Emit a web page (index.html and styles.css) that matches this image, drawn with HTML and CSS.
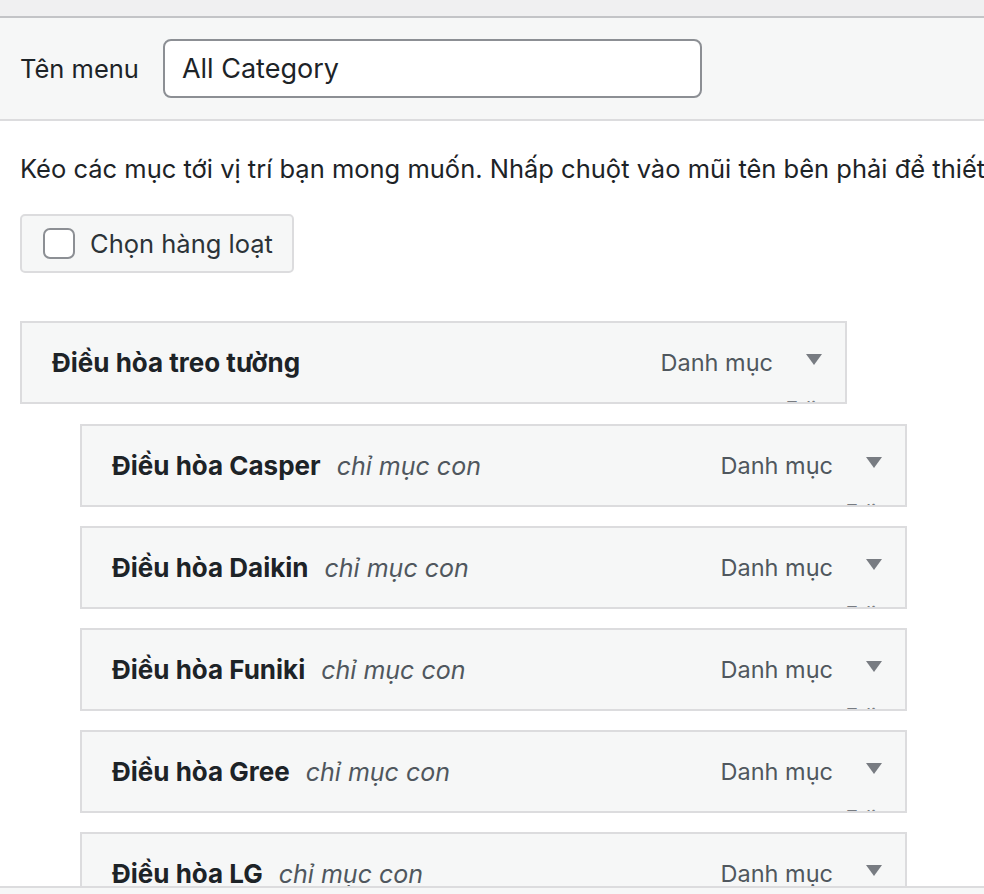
FILE: index.html
```html
<!DOCTYPE html>
<html lang="vi">
<head>
<meta charset="utf-8">
<title>Menu</title>
<link rel="stylesheet" href="styles.css">
</head>
<body>
<div class="topbar"></div>
<div class="header">
  <label class="label" for="menu-name">Tên menu</label>
  <input id="menu-name" class="name-input" type="text" value="All Category">
</div>
<div class="content">
  <p class="hint">Kéo các mục tới vị trí bạn mong muốn. Nhấp chuột vào mũi tên bên phải để thiết lập các tùy chọn cấu hình thêm.</p>
  <label class="bulk">
    <span class="checkbox"></span>
    <span>Chọn hàng loạt</span>
  </label>
  <ul class="menu">
    <li class="item">
      <span class="title">Điều hòa treo tường</span>
      <span class="type">Danh mục</span>
      <span class="arrow"></span>
      <span class="edit">Edit</span>
    </li>
    <li class="item sub">
      <span class="title">Điều hòa Casper</span><span class="subtag">chỉ mục con</span>
      <span class="type">Danh mục</span>
      <span class="arrow"></span>
      <span class="edit">Edit</span>
    </li>
    <li class="item sub">
      <span class="title">Điều hòa Daikin</span><span class="subtag">chỉ mục con</span>
      <span class="type">Danh mục</span>
      <span class="arrow"></span>
      <span class="edit">Edit</span>
    </li>
    <li class="item sub">
      <span class="title">Điều hòa Funiki</span><span class="subtag">chỉ mục con</span>
      <span class="type">Danh mục</span>
      <span class="arrow"></span>
      <span class="edit">Edit</span>
    </li>
    <li class="item sub">
      <span class="title">Điều hòa Gree</span><span class="subtag">chỉ mục con</span>
      <span class="type">Danh mục</span>
      <span class="arrow"></span>
      <span class="edit">Edit</span>
    </li>
    <li class="item sub">
      <span class="title">Điều hòa LG</span><span class="subtag">chỉ mục con</span>
      <span class="type">Danh mục</span>
      <span class="arrow"></span>
      <span class="edit">Edit</span>
    </li>
  </ul>
</div>
<div class="footer"></div>
</body>
</html>
```

FILE: styles.css
```css
html, body {
  margin: 0;
  padding: 0;
  background: #fff;
  overflow: hidden;
  height: 894px;
}
body {
  font-family: Inter, "Noto Sans", sans-serif;
  color: #1d2327;
  font-size: 24px;
}
.topbar {
  height: 16px;
  background: #f0f0f1;
}
.header {
  box-sizing: border-box;
  height: 105px;
  border-top: 2px solid #c3c4c7;
  border-bottom: 2px solid #dcdcde;
  background: #f6f7f7;
  display: flex;
  align-items: center;
  padding-left: 20px;
  gap: 24px;
}
.label {
  font-size: 25.5px;
  color: #1d2327;
}
.name-input {
  box-sizing: border-box;
  width: 539px;
  height: 59px;
  border: 2px solid #8c8f94;
  border-radius: 8px;
  background: #fff;
  padding: 0 17px;
  font-family: inherit;
  font-size: 27px;
  color: #1d2327;
  outline: none;
}
.content {
  padding: 0 20px;
  width: 1500px;
}
.hint {
  margin: 33px 0 0;
  line-height: 30px;
  font-size: 25.5px;
  white-space: nowrap;
  color: #1d2327;
}
.bulk {
  box-sizing: border-box;
  margin-top: 30px;
  width: 274px;
  height: 59px;
  display: flex;
  align-items: center;
  gap: 15px;
  padding-left: 21px;
  background: #f6f7f7;
  border: 2px solid #dcdcde;
  border-radius: 5px;
  color: #2c3338;
  font-size: 25.5px;
}
.checkbox {
  box-sizing: border-box;
  width: 32px;
  height: 31px;
  border: 2px solid #8c8f94;
  border-radius: 7px;
  background: #fff;
}
.menu {
  list-style: none;
  margin: 48px 0 0;
  padding: 0;
}
.item {
  position: relative;
  box-sizing: border-box;
  width: 827px;
  height: 83px;
  border: 2px solid #dcdcde;
  background: #f6f7f7;
  display: flex;
  align-items: center;
  padding-left: 30px;
  overflow: hidden;
  margin-bottom: 19px;
}
.item:first-child {
  margin-bottom: 20px;
}
.sub {
  margin-left: 60px;
}
.title {
  font-weight: 700;
  font-size: 26px;
  color: #1d2327;
}
.subtag {
  margin-left: 16px;
  font-style: italic;
  font-size: 25px;
  color: #50575e;
}
.type {
  margin-left: auto;
  font-size: 23.5px;
  color: #50575e;
}
.arrow {
  width: 0;
  height: 0;
  border-left: 8px solid transparent;
  border-right: 8px solid transparent;
  border-top: 11px solid #787c82;
  margin: 0 23px 6px 33px;
}
.edit {
  position: absolute;
  right: 22px;
  top: 72px;
  font-size: 21px;
  line-height: 30px;
  color: #787c82;
}
.footer {
  position: fixed;
  left: 0;
  right: 0;
  bottom: 0;
  height: 6px;
  border-top: 2px solid #dcdcde;
  background: #f6f7f7;
}
```
